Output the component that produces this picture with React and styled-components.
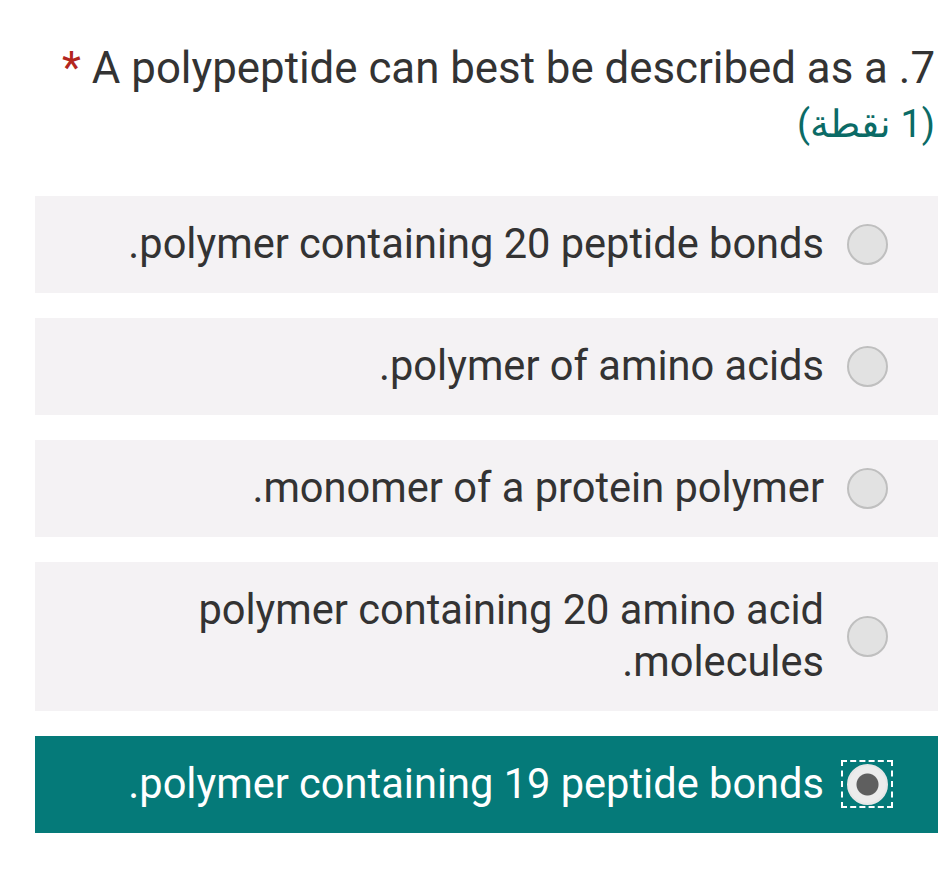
import React from "react";
import styled, { createGlobalStyle } from "styled-components";

const options = [
  { label: "polymer containing 20 peptide bonds." },
  { label: "polymer of amino acids." },
  { label: "monomer of a protein polymer." },
  { label: "polymer containing 20 amino acid molecules." },
  { label: "polymer containing 19 peptide bonds.", checked: true },
];

export default function App() {
  return (
    <>
      <GlobalStyle />
      <Page>
        <Question>
          <Title>
            7. A polypeptide can best be described as a <Star>*</Star>
          </Title>
          <Points>(1 نقطة)</Points>
        </Question>
        <Options>
          {options.map((o) => (
            <Option key={o.label} checked={o.checked}>
              <RadioWrap checked={o.checked}>
                <Radio checked={o.checked} />
              </RadioWrap>
              <Label checked={o.checked}>{o.label}</Label>
            </Option>
          ))}
        </Options>
      </Page>
    </>
  );
}

const GlobalStyle = createGlobalStyle`
  body {
    margin: 0;
    background: #ffffff;
    font-family: Roboto, "Noto Sans", sans-serif;
  }
`;

const Page = styled.div`
  direction: rtl;
  width: 950px;
  box-sizing: border-box;
  padding: 40px 12px 40px 35px;
`;

const Question = styled.div`
  padding-right: 3px;
  margin-bottom: 44px;
`;

const Title = styled.div`
  font-size: 43.8px;
  line-height: 56px;
  color: #333333;
`;

const Star = styled.span`
  color: #b3261e;
`;

const Points = styled.div`
  font-size: 38px;
  line-height: 56px;
  color: #0b6b66;
`;

const Options = styled.div`
  display: flex;
  flex-direction: column;
  gap: 25px;
`;

const Option = styled.div`
  display: flex;
  align-items: center;
  gap: 17px;
  padding: 22px 45px 23px 40px;
  background: ${({ checked }) => (checked ? "#057a79" : "#f4f2f4")};
`;

const RadioWrap = styled.div`
  flex: none;
  width: 52px;
  height: 48px;
  display: flex;
  align-items: center;
  justify-content: center;
  box-sizing: border-box;
  border: 2px dashed ${({ checked }) => (checked ? "#ffffff" : "transparent")};
`;

const Radio = styled.div`
  width: 41px;
  height: 41px;
  box-sizing: border-box;
  border-radius: 50%;
  border: 2px solid ${({ checked }) => (checked ? "#e6e6e6" : "#bfbfbf")};
  background: ${({ checked }) =>
    checked
      ? "radial-gradient(circle, #5f5f5f 0 10.5px, #ececec 11.5px)"
      : "#e2e2e2"};
`;

const Label = styled.div`
  flex: 1;
  font-size: 41.6px;
  line-height: 52px;
  color: ${({ checked }) => (checked ? "#ffffff" : "#333333")};
  text-align: right;
`;
